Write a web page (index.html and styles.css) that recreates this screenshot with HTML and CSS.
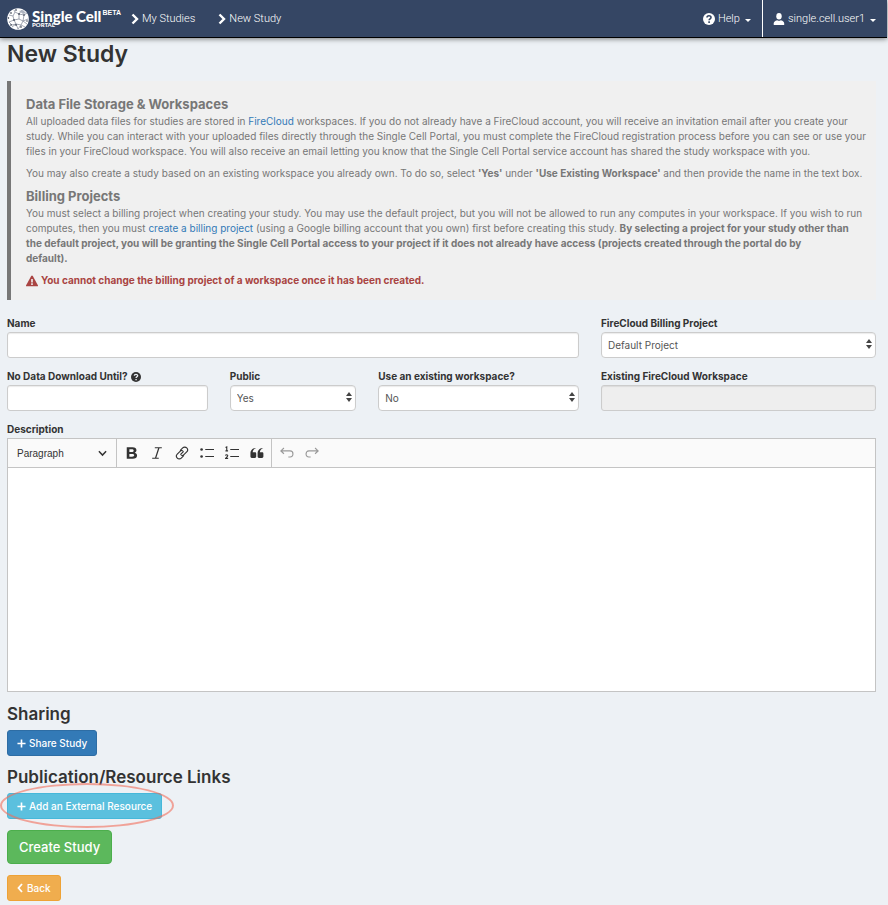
FILE: index.html
```html
<!DOCTYPE html>
<html lang="en">
<head>
<meta charset="utf-8">
<title>New Study - Single Cell Portal</title>
<link rel="stylesheet" href="styles.css">
</head>
<body>
<header class="navbar">
  <a class="brand" href="#">
    <svg class="brand-mark" viewBox="0 0 22 22" aria-hidden="true">
      <circle cx="11" cy="11" r="10.8" fill="#fff"/>
      <path d="M2 7l4 1 2-4 4 2 3-4M6 8l1 4-5 2M7 12l5-1 0-5 5 1 3-2M12 11l4 2 5-2M17 7l-1 6-2 4-5-1-2-4M9 16l-4 3M9 16l2 5M14 17l4 2M14 17l-3 4M16 13l4 3M2 14l3 3 4-1M8 4l-1-2" fill="none" stroke="#8a91a0" stroke-width=".8"/>
      <g fill="#172033"><circle cx="4" cy="5" r=".8"/><circle cx="9" cy="2" r=".8"/><circle cx="1.500" cy="10" r=".7"/><circle cx="7" cy="12" r=".8"/><circle cx="12" cy="6" r=".8"/><circle cx="17" cy="7" r=".7"/><circle cx="4" cy="17" r=".8"/><circle cx="9" cy="17" r=".8"/><circle cx="14" cy="19" r=".8"/><circle cx="20" cy="13" r=".7"/></g>
      <path d="M12 3l4-1 3 3-3 1z" fill="#aeb4c0"/>
    </svg>
    <span class="brand-text"><span class="brand-name">Single Cell</span><span class="brand-sub">PORTAL</span></span>
    <span class="brand-beta">BETA</span>
  </a>
  <nav class="crumbs">
    <a href="#"><svg class="chev" viewBox="0 0 8 12"><path d="M1.500 1.500L6 6l-4.500 4.500" fill="none" stroke="currentColor" stroke-width="2.400"/></svg>My Studies</a>
    <a href="#"><svg class="chev" viewBox="0 0 8 12"><path d="M1.500 1.500L6 6l-4.500 4.500" fill="none" stroke="currentColor" stroke-width="2.400"/></svg>New Study</a>
  </nav>
  <nav class="account">
    <a href="#"><svg class="icon12" viewBox="0 0 12 12"><circle cx="6" cy="6" r="6" fill="currentColor"/><path d="M4 4.600C4 2.200 8 2.200 8 4.500 8 5.800 6.100 5.800 6.100 7.300M6.100 8.300v1.700" fill="none" stroke="#354664" stroke-width="1.600"/></svg>Help<span class="caret"></span></a>
    <a href="#" class="user"><svg class="icon12" viewBox="0 0 12 12"><ellipse cx="6" cy="3.200" rx="2.700" ry="3.200" fill="currentColor"/><path d="M.8 12C.3 8.500 2 8 4.200 7.200 5.500 8 6.500 8 7.800 7.200 10 8 11.700 8.500 11.200 12z" fill="currentColor"/></svg>single.cell.user1<span class="caret"></span></a>
  </nav>
</header>

<main class="page">
  <h1>New Study</h1>

  <section class="notice">
    <h2>Data File Storage &amp; Workspaces</h2>
    <p>All uploaded data files for studies are stored in <a href="#">FireCloud</a> workspaces. If you do not already have a FireCloud account, you will receive an invitation email after you create your study. While you can interact with your uploaded files directly through the Single Cell Portal, you must complete the FireCloud registration process before you can see or use your files in your FireCloud workspace. You will also receive an email letting you know that the Single Cell Portal service account has shared the study workspace with you.</p>
    <p>You may also create a study based on an existing workspace you already own. To do so, select <strong>'Yes'</strong> under <strong>'Use Existing Workspace'</strong> and then provide the name in the text box.</p>
    <h2>Billing Projects</h2>
    <p>You must select a billing project when creating your study. You may use the default project, but you will not be allowed to run any computes in your workspace. If you wish to run computes, then you must <a href="#">create a billing project</a> (using a Google billing account that you own) first before creating this study. <strong>By selecting a project for your study other than<br>the default project, you will be granting the Single Cell Portal access to your project if it does not already have access (projects created through the portal do by<br>default).</strong></p>
    <p class="warning"><svg class="icon12" viewBox="0 0 12 12"><path d="M6 .5Q6.500.5 6.800 1L12 10.600Q12.200 11.300 11.400 11.300H.6Q-.2 11.300 0 10.600L5.200 1Q5.500.5 6 .5z" fill="currentColor"/><path d="M6 4v3.400M6 8.300v1.600" stroke="#f0f0f0" stroke-width="1.600"/></svg>You cannot change the billing project of a workspace once it has been created.</p>
  </section>

  <form class="study-form">
    <div class="field span-8">
      <label for="name">Name</label>
      <input id="name" type="text">
    </div>
    <div class="field span-4">
      <label for="billing">FireCloud Billing Project</label>
      <div class="select"><select id="billing"><option>Default Project</option></select><svg viewBox="0 0 6 12"><path d="M3 1l3 4H0zM3 11L0 7h6z"/></svg></div>
    </div>
    <div class="field span-3">
      <label for="embargo">No Data Download Until? <svg class="help" viewBox="0 0 12 12"><circle cx="6" cy="6" r="6" fill="currentColor"/><path d="M4 4.600C4 2.200 8 2.200 8 4.500 8 5.800 6.100 5.800 6.100 7.300M6.100 8.300v1.700" fill="none" stroke="#edf1f5" stroke-width="1.600"/></svg></label>
      <input id="embargo" type="text">
    </div>
    <div class="field span-2">
      <label for="public">Public</label>
      <div class="select"><select id="public"><option>Yes</option><option>No</option></select><svg viewBox="0 0 6 12"><path d="M3 1l3 4H0zM3 11L0 7h6z"/></svg></div>
    </div>
    <div class="field span-3">
      <label for="existing">Use an existing workspace?</label>
      <div class="select"><select id="existing"><option>No</option><option>Yes</option></select><svg viewBox="0 0 6 12"><path d="M3 1l3 4H0zM3 11L0 7h6z"/></svg></div>
    </div>
    <div class="field span-4">
      <label for="workspace">Existing FireCloud Workspace</label>
      <input id="workspace" type="text" disabled>
    </div>
    <div class="field span-12">
      <label for="description">Description</label>
      <div class="editor">
        <div class="toolbar">
          <div class="group">
            <button type="button" class="heading-menu">Paragraph<svg viewBox="0 0 8 6"><path d="M.8 1L4 4.400 7.200 1" fill="none" stroke="currentColor" stroke-width="1.300"/></svg></button>
          </div>
          <div class="group">
            <button type="button" class="tool" aria-label="Bold"><svg viewBox="0 0 16 16"><path fill-rule="evenodd" d="M2 1.500h6.600c2.900 0 4.500 1.300 4.500 3.400 0 1.400-.8 2.300-2 2.800 1.700.4 2.700 1.500 2.700 3.100 0 2.400-1.900 3.700-5 3.700H2zM5 3.800v3h2.400c1.700 0 2.500-.5 2.500-1.500S9 3.800 7.600 3.800zM5 9v3.200h3c1.700 0 2.500-.6 2.500-1.600S9.600 9 7.900 9z" fill="currentColor"/></svg></button>
            <button type="button" class="tool" aria-label="Italic"><svg viewBox="0 0 16 16"><path d="M5.500 2h8M2.500 14h7.500M10.200 2L6.300 14" fill="none" stroke="currentColor" stroke-width="1.400"/></svg></button>
            <button type="button" class="tool" aria-label="Link"><svg viewBox="0 0 16 16"><path d="M6.100 9.900l3.800-3.800M5.800 5.200l3-3c1.400-1.400 3.400-1.200 4.600 0s1.400 3.100 0 4.500l-3.200 3.200c-1 1-2.300 1.100-3.400.5M10.200 10.800l-3 3c-1.400 1.400-3.400 1.200-4.600 0s-1.400-3.100 0-4.500l3.200-3.200c1-1 2.300-1.100 3.400-.5" fill="none" stroke="currentColor" stroke-width="1.300"/></svg></button>
            <button type="button" class="tool" aria-label="Bulleted list"><svg viewBox="0 0 16 16"><circle cx="1.800" cy="4" r="1.500" fill="currentColor"/><circle cx="1.800" cy="12" r="1.500" fill="currentColor"/><path d="M6 4h10M6 12h10" stroke="currentColor" stroke-width="1.300"/></svg></button>
            <button type="button" class="tool" aria-label="Numbered list"><svg viewBox="0 0 16 16"><path d="M.6 1.800l1.400-.7v4.400M.5 5.600h3M.6 11c.3-1.500 2.700-1.200 2.500.2-.1 1-1.500 1.900-2.500 2.900h3M6 4h10M6 12h10" fill="none" stroke="currentColor" stroke-width="1.300"/></svg></button>
            <button type="button" class="tool" aria-label="Block quote"><svg viewBox="0 0 16 16"><path d="M7 2.500C4.900 3 3.400 4.300 3 7h2.600c.9 0 1.500.6 1.500 1.500v3.600c0 .9-.6 1.500-1.500 1.500H2c-.9 0-1.500-.6-1.500-1.500V8.500C.5 4.300 3.200 2 7 2.500zM15.200 2.500c-2.100.5-3.600 1.800-4 4.500h2.600c.9 0 1.500.6 1.500 1.500v3.600c0 .9-.6 1.500-1.500 1.500h-3.600c-.9 0-1.500-.6-1.500-1.500V8.500c0-4.200 2.700-6.500 6.500-6z" fill="currentColor"/></svg></button>
          </div>
          <div class="group">
            <button type="button" class="tool" aria-label="Undo" disabled><svg viewBox="0 0 16 16"><path d="M4.500 2.300L1 5.600l3.500 3.300M1 5.600h10.500c4.400 0 4.400 7 0 7H9.500" fill="none" stroke="currentColor" stroke-width="1.300"/></svg></button>
            <button type="button" class="tool" aria-label="Redo" disabled><svg viewBox="0 0 16 16"><path d="M11.500 2.300L15 5.600l-3.500 3.300M15 5.600H4.500c-4.400 0-4.400 7 0 7h2" fill="none" stroke="currentColor" stroke-width="1.300"/></svg></button>
          </div>
        </div>
        <textarea id="description"></textarea>
      </div>
    </div>
  </form>

  <section class="actions">
    <h3>Sharing</h3>
    <button type="button" class="btn primary"><svg class="icon-sm" viewBox="0 0 10 10"><path d="M5 .5v9M.5 5h9" stroke="currentColor" stroke-width="1.800"/></svg>Share Study</button>
    <h3>Publication/Resource Links</h3>
    <div class="circled">
      <button type="button" class="btn info"><svg class="icon-sm" viewBox="0 0 10 10"><path d="M5 .5v9M.5 5h9" stroke="currentColor" stroke-width="1.800"/></svg>Add an External Resource</button>
      <span class="ring"></span>
    </div>
    <button type="submit" class="btn success">Create Study</button>
    <a href="#" class="btn back"><svg class="chev-left" viewBox="0 0 6 10"><path d="M5 1L1.500 5 5 9" fill="none" stroke="currentColor" stroke-width="1.800"/></svg>Back</a>
  </section>
</main>
</body>
</html>
```
FILE: styles.css
```css
* { box-sizing: border-box; }

body {
  margin: 0;
  background: #edf1f5;
  color: #333;
  font: 10px/15px Inter, "Liberation Sans", Arial, sans-serif;
}

a { color: #337ab7; text-decoration: none; }
h1, h2, h3, p { margin: 0; }
svg { flex: none; }
button, input, select, textarea { font: inherit; color: inherit; }

/* Navigation */
.navbar {
  display: flex;
  height: 38px;
  margin-right: 1px;
  background: #354664;
  border-bottom: 1px solid #000;
  box-shadow: 0 1px 5px rgba(0, 0, 0, .5);
}
.navbar a {
  display: flex;
  align-items: center;
  color: #fff;
  font-family: Roboto, sans-serif;
  font-weight: 300;
  font-size: 11px;
}
.navbar .brand { padding-left: 7px; font-family: Lato, sans-serif; font-weight: 900; }
.brand-mark { width: 22px; height: 22px; }
.brand-text { display: flex; flex-direction: column; margin-left: 3px; }
.brand-name { font-size: 15px; line-height: 12px; }
.brand-sub { font-size: 6px; line-height: 6px; }
.brand-beta { align-self: flex-start; margin: 9px 0 0 1px; font: bold 7px/8px "Liberation Sans", sans-serif; }
.crumbs { display: flex; gap: 23px; margin-left: 10px; }
.chev { width: 8px; height: 12px; margin-right: 3px; }
.account { display: flex; margin-left: auto; }
.account a { padding: 0 11px 0 10px; }
.account .user { border-left: 1px solid #fff; }
.icon12 { width: 12px; height: 12px; margin-right: 3px; }
.caret { margin: 3px 0 0 5px; border: 3px solid transparent; border-top-color: #fff; border-bottom: 0; }

.page { padding: 2px 12px 5px 7px; }
h1 { font-size: 23px; line-height: 28px; font-weight: 600; }

/* Notice */
.notice {
  margin-top: 13px;
  padding: 15px 8px 12px 15px;
  border-left: 4px solid #777;
  background: #f0f0f0;
  color: #777;
}
.notice h2 { font-size: 13px; line-height: 16px; font-weight: 700; margin-bottom: 2px; }
.notice p { margin-bottom: 7px; }
.notice .warning { display: flex; align-items: center; margin: 0; color: #a94442; font-weight: 700; }
strong { font-weight: 700; }

/* Form */
.study-form {
  display: grid;
  grid-template-columns: repeat(12, 1fr);
  gap: 11px 22px;
  margin-top: 16px;
}
.span-2 { grid-column: span 2; }
.span-3 { grid-column: span 3; }
.span-4 { grid-column: span 4; }
.span-8 { grid-column: span 8; }
.span-12 { grid-column: span 12; }
.field { min-width: 0; }
.field label { display: flex; align-items: center; gap: 3px; margin-bottom: 1px; font-weight: 700; }
.help { width: 10px; height: 10px; }
input, select {
  display: block;
  width: 100%;
  height: 26px;
  padding: 0 6px;
  border: 1px solid #ccc;
  border-radius: 3px;
  background: #fff;
  box-shadow: inset 0 1px 1px rgba(0, 0, 0, .08);
}
input:disabled { background: #eee; }
.select { position: relative; }
.select select { appearance: none; border-radius: 4px; color: #555; }
.select svg { position: absolute; right: 4px; top: 6px; width: 6px; height: 12px; fill: #444; pointer-events: none; }

.editor { border: 1px solid #c4c4c4; background: #fff; }
.toolbar { display: flex; height: 29px; background: #fafafa; border-bottom: 1px solid #c4c4c4; }
.group { display: flex; align-items: center; padding: 0 2px; }
.group + .group { border-left: 1px solid #c4c4c4; }
.toolbar button { display: flex; align-items: center; border: 0; background: none; }
.toolbar .heading-menu { justify-content: space-between; width: 104px; padding: 0 7px; font-family: "Liberation Sans", sans-serif; }
.heading-menu svg { width: 9px; height: 7px; }
.toolbar .tool { justify-content: center; width: 25px; height: 25px; padding: 0; }
.tool svg { width: 14px; height: 14px; }
.tool:disabled { color: #999; }
.editor textarea { display: block; width: 100%; height: 223px; padding: 8px; border: 0; background: #fff; resize: none; }

/* Actions */
.actions { display: flex; flex-direction: column; align-items: flex-start; padding-top: 1px; }
.actions h3 { margin: 11px 0 6px; font-size: 17px; line-height: 20px; font-weight: 600; }
.btn {
  display: flex;
  align-items: center;
  height: 26px;
  padding: 0 9px;
  border: 1px solid;
  border-radius: 3px;
  color: #fff;
  font-weight: 500;
}
.primary { background: #337ab7; border-color: #2e6da4; }
.info { background: #5bc0de; border-color: #46b8da; }
.success { height: 34px; margin: 11px 0; padding: 0 11px; background: #5cb85c; border-color: #4cae4c; border-radius: 4px; font-size: 13px; }
.back { background: #f0ad4e; border-color: #eea236; }
.icon-sm { width: 9px; height: 9px; margin-right: 3px; }
.chev-left { width: 6px; height: 10px; margin-right: 4px; }
.circled { position: relative; }
.ring { position: absolute; inset: -10px -12px -9px -7px; border: 2px solid rgba(242, 110, 90, .6); border-radius: 50%; pointer-events: none; }
```
